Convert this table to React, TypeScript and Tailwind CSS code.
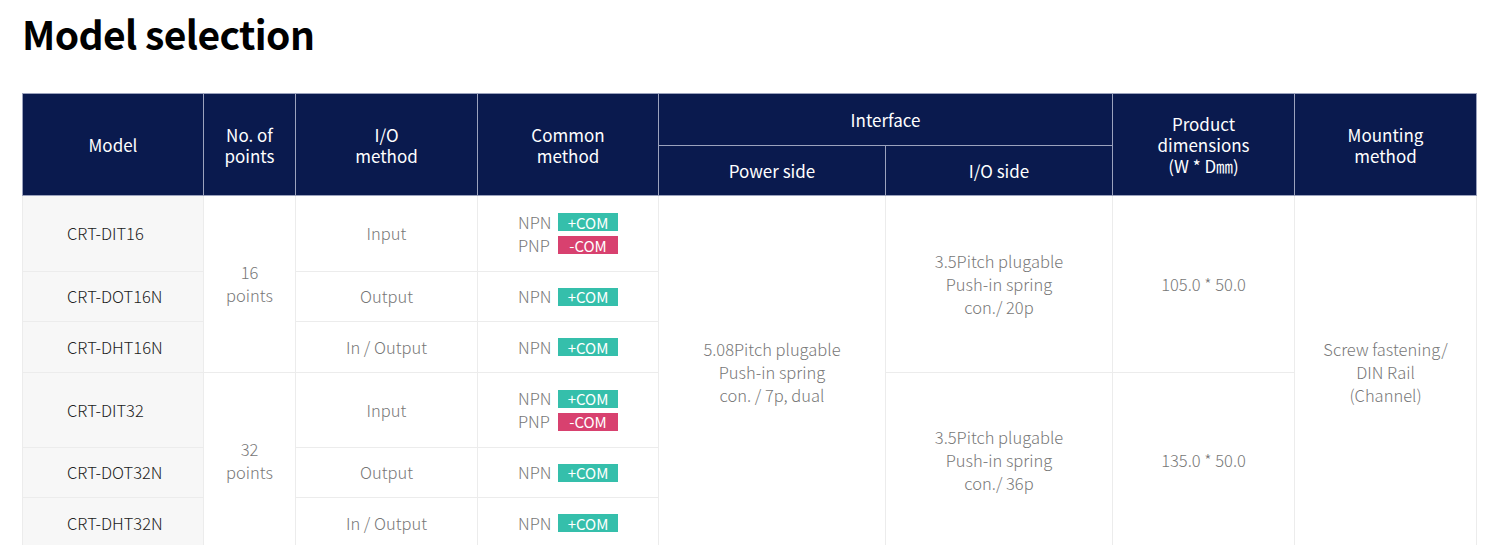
import React from "react";

const Badge = ({ plus }: { plus: boolean }) => (
  <span
    className={
      "inline-flex h-[18px] w-[60px] items-center justify-center text-[15px] font-normal leading-none text-white " +
      (plus ? "bg-[#35bfab]" : "bg-[#d8416f]")
    }
  >
    {plus ? "+COM" : "-COM"}
  </span>
);

const Line = ({ kind, plus }: { kind: string; plus: boolean }) => (
  <div className="flex h-[23px] items-center justify-center gap-[7px]">
    <span className="w-[33px] text-left">{kind}</span>
    <Badge plus={plus} />
  </div>
);

const th =
  "border border-[#9ba2bd] bg-[#0a1a4e] text-white text-[17px] font-normal leading-[21px] text-center align-middle p-0";
const tdModel =
  "border border-[#ececec] bg-[#f7f7f7] text-[#222] text-[16.5px] font-light leading-[23px] text-left pl-[44px] align-middle p-0";
const td =
  "border border-[#ececec] bg-white text-[#777] text-[16.5px] font-light leading-[23px] text-center align-middle p-0";

export default function App() {
  return (
    <div
      className="bg-white w-[1492px] h-[545px] overflow-hidden"
      style={{ fontFamily: '"Noto Sans CJK KR", "Noto Sans", sans-serif' }}
    >
      <h1 className="pl-[22px] pt-[6px] text-[39px] font-bold leading-[54px] text-black tracking-[-0.6px]">
        Model selection
      </h1>
      <div className="pl-[22px] pt-[33px]">
        <table className="border-collapse table-fixed w-[1454px]">
          <colgroup>
            <col className="w-[181px]" />
            <col className="w-[92px]" />
            <col className="w-[182px]" />
            <col className="w-[181px]" />
            <col className="w-[227px]" />
            <col className="w-[227px]" />
            <col className="w-[182px]" />
            <col className="w-[182px]" />
          </colgroup>
          <thead>
            <tr className="h-[52px]">
              <th rowSpan={2} className={th}>Model</th>
              <th rowSpan={2} className={th}>No. of<br />points</th>
              <th rowSpan={2} className={th}>I/O<br />method</th>
              <th rowSpan={2} className={th}>Common<br />method</th>
              <th colSpan={2} className={th}>Interface</th>
              <th rowSpan={2} className={th}>Product<br />dimensions<br />(W * D㎜)</th>
              <th rowSpan={2} className={th}>Mounting<br />method</th>
            </tr>
            <tr className="h-[50px]">
              <th className={th}>Power side</th>
              <th className={th}>I/O side</th>
            </tr>
          </thead>
          <tbody>
            <tr className="h-[76px]">
              <td className={tdModel}>CRT-DIT16</td>
              <td rowSpan={3} className={td}>16<br />points</td>
              <td className={td}>Input</td>
              <td className={td}>
                <Line kind="NPN" plus />
                <Line kind="PNP" plus={false} />
              </td>
              <td rowSpan={6} className={td}>
                5.08Pitch plugable<br />Push-in spring<br />con. / 7p, dual
              </td>
              <td rowSpan={3} className={td}>
                3.5Pitch plugable<br />Push-in spring<br />con./ 20p
              </td>
              <td rowSpan={3} className={td}>105.0 * 50.0</td>
              <td rowSpan={6} className={td}>
                Screw fastening/<br />DIN Rail<br />(Channel)
              </td>
            </tr>
            <tr className="h-[50px]">
              <td className={tdModel}>CRT-DOT16N</td>
              <td className={td}>Output</td>
              <td className={td}><Line kind="NPN" plus /></td>
            </tr>
            <tr className="h-[51px]">
              <td className={tdModel}>CRT-DHT16N</td>
              <td className={td}>In / Output</td>
              <td className={td}><Line kind="NPN" plus /></td>
            </tr>
            <tr className="h-[75px]">
              <td className={tdModel}>CRT-DIT32</td>
              <td rowSpan={3} className={td}>32<br />points</td>
              <td className={td}>Input</td>
              <td className={td}>
                <Line kind="NPN" plus />
                <Line kind="PNP" plus={false} />
              </td>
              <td rowSpan={3} className={td}>
                3.5Pitch plugable<br />Push-in spring<br />con./ 36p
              </td>
              <td rowSpan={3} className={td}>135.0 * 50.0</td>
            </tr>
            <tr className="h-[50px]">
              <td className={tdModel}>CRT-DOT32N</td>
              <td className={td}>Output</td>
              <td className={td}><Line kind="NPN" plus /></td>
            </tr>
            <tr className="h-[51px]">
              <td className={tdModel}>CRT-DHT32N</td>
              <td className={td}>In / Output</td>
              <td className={td}><Line kind="NPN" plus /></td>
            </tr>
          </tbody>
        </table>
      </div>
    </div>
  );
}
